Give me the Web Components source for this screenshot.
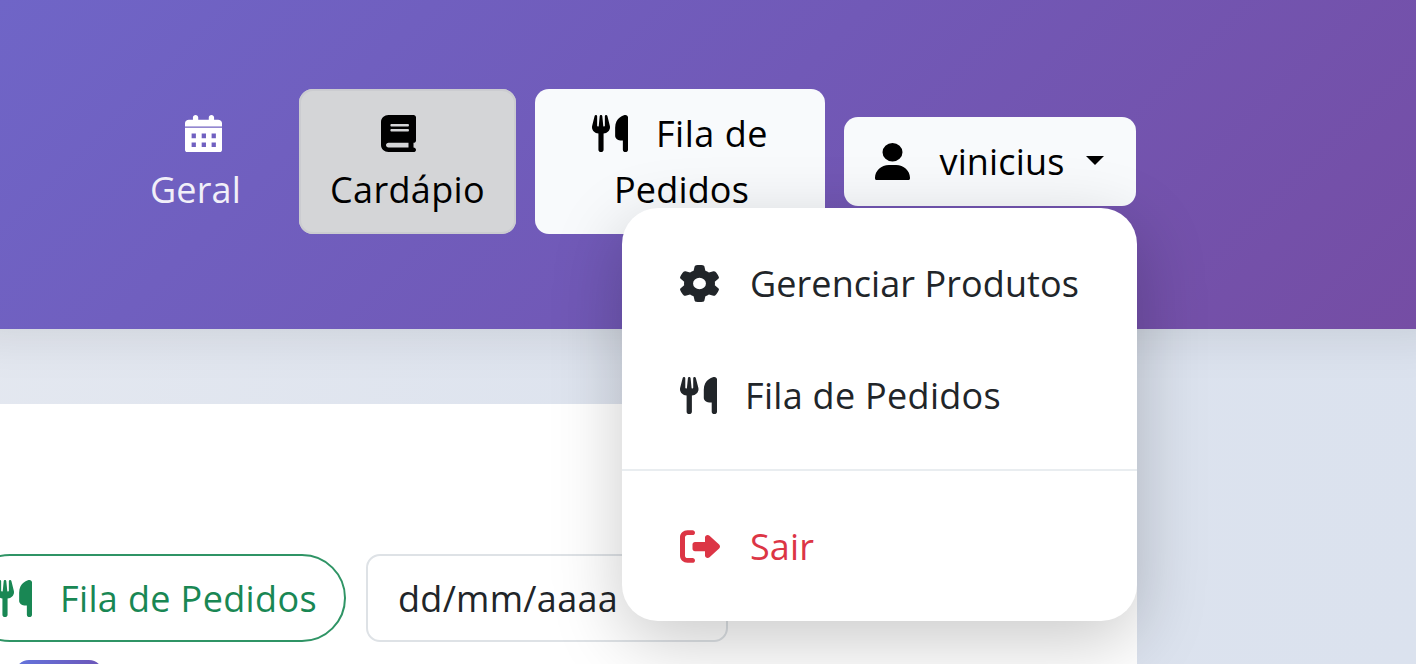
<!DOCTYPE html>
<html lang="pt-BR">
<head>
<meta charset="utf-8">
<title>Cardápio</title>
<style>
html,body{margin:0;height:664px;overflow:hidden}
body{font:400 36px/56px "Open Sans","Noto Sans",sans-serif;color:#212529}
</style>
</head>
<body>
<app-page>
  <app-header slot="header">
    <nav-button variant="plain" stacked style="--w:169px"><fa-icon name="calendar" style="--iw:37px;--shift:15px"></fa-icon><fit-label w="91">Geral</fit-label></nav-button>
    <nav-button variant="active" stacked style="--w:217px"><fa-icon name="book" style="--iw:35px;--shift:-19px"></fa-icon><fit-label w="155">Cardápio</fit-label></nav-button>
    <nav-button variant="light" stacked style="--w:290px"><span style="display:flex;align-items:center;gap:28px;height:56px"><fa-icon name="utensils" style="--iw:36px"></fa-icon><fit-label w="112">Fila de</fit-label></span><fit-label w="135" style="margin-left:3px">Pedidos</fit-label></nav-button>
    <user-menu>
      <nav-button variant="light" slot="trigger" style="--w:292px"><span style="display:flex;align-items:center;height:56px"><fa-icon name="user" style="--iw:35px"></fa-icon><fit-label w="125" style="margin-left:30px">vinicius</fit-label><caret-down></caret-down></span></nav-button>
      <menu-item><fa-icon name="gear" style="--iw:39px"></fa-icon><fit-label w="329" style="margin-left:31px">Gerenciar Produtos</fit-label></menu-item>
      <menu-item><fa-icon name="utensils" style="--iw:37px"></fa-icon><fit-label w="256" style="margin-left:28px">Fila de Pedidos</fit-label></menu-item>
      <menu-divider></menu-divider>
      <menu-item style="color:#dc3545"><fa-icon name="exit" style="--iw:40px"></fa-icon><fit-label w="64" style="margin-left:30px">Sair</fit-label></menu-item>
    </user-menu>
  </app-header>
  <content-card>
    <pill-button><fa-icon name="utensils" style="--iw:36px"></fa-icon><fit-label w="257" style="margin-left:28px">Fila de Pedidos</fit-label></pill-button>
    <date-field><fit-label w="220">dd/mm/aaaa</fit-label></date-field>
  </content-card>
</app-page>
<script>
const define = (name, html, setup) => customElements.define(name, class extends HTMLElement {
  constructor() {
    super();
    this.attachShadow({ mode: 'open' }).innerHTML = html;
  }
  connectedCallback() { if (setup) setup(this, this.shadowRoot); }
});

const ICONS = {
  calendar: ['0 0 448 512', 'M96 32V64H48C21.5 64 0 85.5 0 112v48H448V112c0-26.5-21.5-48-48-48H352V32c0-17.7-14.3-32-32-32s-32 14.3-32 32V64H160V32c0-17.7-14.3-32-32-32S96 14.3 96 32zM448 178H0V484c0 17 11 28 28 28H420c17 0 28-11 28-28V178zM80 256h52v64H80zM202 256h52v64h-52zM322 256h52v64h-52zM80 380h52v64H80zM202 380h52v64h-52zM322 380h52v64h-52z'],
  book: ['0 0 448 512', 'M96 0C43 0 0 43 0 96V416c0 53 43 96 96 96H384h32c17.7 0 32-14.3 32-32s-14.3-32-32-32V384c17.7 0 32-14.3 32-32V32c0-17.7-14.3-32-32-32H384 96zm0 384H352v64H96c-17.7 0-32-14.3-32-32s14.3-32 32-32zM136 124H342c10 0 16 7 16 18s-6 18-16 18H136c-10 0-16-7-16-18s6-18 16-18zM136 194H342c10 0 16 7 16 18s-6 18-16 18H136c-10 0-16-7-16-18s6-18 16-18z'],
  utensils: ['0 0 448 512', 'M416 0C400 0 288 32 288 176V288c0 35.3 28.7 64 64 64h32V480c0 17.7 14.3 32 32 32s32-14.3 32-32V352 240 32c0-17.7-14.3-32-32-32zM64 16C64 7.8 57.9 1 49.7 .1S34.2 4.6 32.4 12.5L2.1 148.8C.7 155.1 0 161.5 0 167.9c0 45.9 35.1 83.6 80 87.7V480c0 17.7 14.3 32 32 32s32-14.3 32-32V255.6c44.9-4.1 80-41.8 80-87.7c0-6.4-.7-12.8-2.1-19.1L191.6 12.5c-1.8-8-9.3-13.3-17.4-12.4S160 7.8 160 16V150.2c0 5.4-4.4 9.8-9.8 9.8c-5.1 0-9.3-3.9-9.8-9L127.9 14.6C127.2 6.3 120.3 0 112 0s-15.2 6.3-15.9 14.6L83.7 151c-.5 5.1-4.7 9-9.8 9c-5.4 0-9.8-4.4-9.8-9.8V16z'],
  user: ['0 0 448 512', 'M224 256A128 128 0 1 0 224 0a128 128 0 1 0 0 256zm-45.7 48C79.8 304 0 383.8 0 482.3C0 500 4 512 14 512H434c10 0 14-12 14-29.7C448 383.8 368.2 304 269.7 304H178.3z'],
  gear: ['14 0 484 512', 'M495.9 166.6c3.2 8.7 .5 18.4-6.4 24.6l-43.3 39.4c1.1 8.3 1.7 16.8 1.7 25.4s-.6 17.1-1.7 25.4l43.3 39.4c6.9 6.2 9.6 15.9 6.4 24.6c-4.4 11.9-9.7 23.3-15.8 34.3l-4.7 8.1c-6.6 11-14 21.4-22.1 31.2c-5.9 7.2-15.7 9.6-24.5 6.8l-55.7-17.7c-13.4 10.3-28.2 18.9-44 25.4l-12.5 57.1c-2 9.1-9 16.3-18.2 17.8c-13.8 2.3-28 3.5-42.5 3.5s-28.7-1.2-42.5-3.5c-9.2-1.5-16.2-8.7-18.2-17.8l-12.5-57.1c-15.8-6.5-30.6-15.1-44-25.4L83.1 425.9c-8.8 2.8-18.6 .3-24.5-6.8c-8.1-9.8-15.5-20.2-22.1-31.2l-4.7-8.1c-6.1-11-11.4-22.4-15.8-34.3c-3.2-8.7-.5-18.4 6.4-24.6l43.3-39.4C64.6 273.1 64 264.6 64 256s.6-17.1 1.7-25.4L22.4 191.2c-6.9-6.2-9.6-15.9-6.4-24.6c4.4-11.9 9.7-23.3 15.8-34.3l4.7-8.1c6.6-11 14-21.4 22.1-31.2c5.9-7.2 15.7-9.6 24.5-6.8l55.7 17.7c13.4-10.3 28.2-18.9 44-25.4l12.5-57.1c2-9.1 9-16.3 18.2-17.8C227.3 1.2 241.5 0 256 0s28.7 1.2 42.5 3.5c9.2 1.5 16.2 8.7 18.2 17.8l12.5 57.1c15.8 6.5 30.6 15.1 44 25.4l55.7-17.7c8.8-2.8 18.6-.3 24.5 6.8c8.1 9.8 15.5 20.2 22.1 31.2l4.7 8.1c6.1 11 11.4 22.4 15.8 34.3zM256 336a80 80 0 1 0 0-160 80 80 0 1 0 0 160z'],
  exit: ['0 0 512 512', 'M377.9 105.9L500.7 228.7c7.2 7.2 11.3 17.1 11.3 27.3s-4.1 20.1-11.3 27.3L377.9 406.1c-6.4 6.4-15 9.9-24 9.9c-18.7 0-33.9-15.2-33.9-33.9l0-62.1-128 0c-17.7 0-32-14.3-32-32l0-64c0-17.7 14.3-32 32-32l128 0 0-62.1c0-18.7 15.2-33.9 33.9-33.9c9 0 17.6 3.6 24 9.9zM160 96L96 96c-17.7 0-32 14.3-32 32l0 256c0 17.7 14.3 32 32 32l64 0c17.7 0 32 14.3 32 32s-14.3 32-32 32l-64 0c-53 0-96-43-96-96L0 128C0 75 43 32 96 32l64 0c17.7 0 32 14.3 32 32s-14.3 32-32 32z']
};

define('fa-icon', `<style>:host{display:flex;align-items:center;flex:none;box-sizing:border-box;height:56px;padding-top:1px;width:var(--iw);margin-left:var(--shift,0)}svg{display:block;width:100%;height:37px;fill:currentColor;fill-rule:evenodd}</style><svg preserveAspectRatio="none" aria-hidden="true"><path/></svg>`,
  (el, root) => {
    const [box, d] = ICONS[el.getAttribute('name')];
    root.querySelector('svg').setAttribute('viewBox', box);
    root.querySelector('path').setAttribute('d', d);
  });

/* A label tracked so that its run spans the width in its "w" attribute. */
define('fit-label', `<style>:host{display:block;flex:none;box-sizing:border-box;white-space:nowrap;height:56px;padding-top:1px}span{display:inline-block}</style><span><slot></slot></span>`,
  (el, root) => {
    const w = +el.getAttribute('w');
    el.style.width = w + 'px';
    const span = root.querySelector('span');
    span.style.letterSpacing = (w - span.getBoundingClientRect().width) / el.textContent.length + 'px';
  });

define('caret-down', `<style>:host{display:block;width:0;height:0;margin:-2px 2px 0 21px;border:solid transparent;border-width:9px 9px 0;border-top-color:#000}</style>`);

define('nav-button', `<style>
:host{display:flex;align-items:center;justify-content:center;box-sizing:border-box;width:var(--w);padding:16px 0 17px;border-radius:14px;color:#000;background:#f8fafc;flex:none}
:host([stacked]){flex-direction:column}
:host([variant=active]){background:#d4d5d7;box-shadow:inset 0 0 0 2px #cbccd0}
:host([variant=plain]){background:none;color:#fff}
:host([variant=plain]) ::slotted(fit-label){opacity:.9}
</style><slot></slot>`);

define('menu-item', `<style>:host{display:flex;align-items:center;height:56px;padding:28px 58px}</style><slot></slot>`);
define('menu-divider', `<style>:host{display:block;height:2px;margin:18px 0 19px;background:#e9edf0}</style>`);

define('user-menu', `<style>
:host{display:block;position:relative}
.menu{position:absolute;z-index:5;top:91px;right:-1px;width:515px;height:413px;box-sizing:border-box;padding-top:19px;border-radius:36px;background:#fff;color:#212529;box-shadow:0 20px 70px rgba(0,0,0,.21)}
</style><slot name="trigger"></slot><div class="menu"><slot></slot></div>`);

define('app-header', `<style>
:host{display:flex;align-items:center;justify-content:flex-end;gap:19px;box-sizing:border-box;height:329px;padding:0 280px 6px 0;position:relative;z-index:2;background:linear-gradient(135deg,#6f65c7 0%,#7159b7 50%,#754da4 100%);box-shadow:0 -28px 46px 36px rgba(0,0,0,.09)}
</style><slot></slot>`);

define('pill-button', `<style>:host{display:flex;align-items:center;box-sizing:border-box;height:88px;width:380px;padding-left:28px;border:2px solid #2f9465;border-radius:44px;color:#198754;flex:none}</style><slot></slot>`);
define('date-field', `<style>:host{display:flex;align-items:center;box-sizing:border-box;width:362px;height:88px;padding-left:30px;border:2px solid #dee2e6;border-radius:14px;flex:none}</style><slot></slot>`);

define('content-card', `<style>
:host{display:block;width:1137px;height:260px;margin-top:75px;background:#fff;overflow:hidden}
.row{display:flex;gap:20px;margin:150px 0 0 -34px;height:88px}
.tab{height:20px;width:88px;margin:18px 0 0 15px;border-radius:14px 14px 0 0;background:linear-gradient(90deg,#6374dc,#6d56b8)}
</style><div class="row"><slot></slot></div><div class="tab"></div>`);

define('app-page', `<style>
:host{display:block;width:1416px;height:664px;overflow:hidden;background:linear-gradient(105deg,#e4e8f0 0,#dde3ee 50%,#dbe2ee 100%)}
</style><slot name="header"></slot><slot></slot>`);
</script>
</body>
</html>
